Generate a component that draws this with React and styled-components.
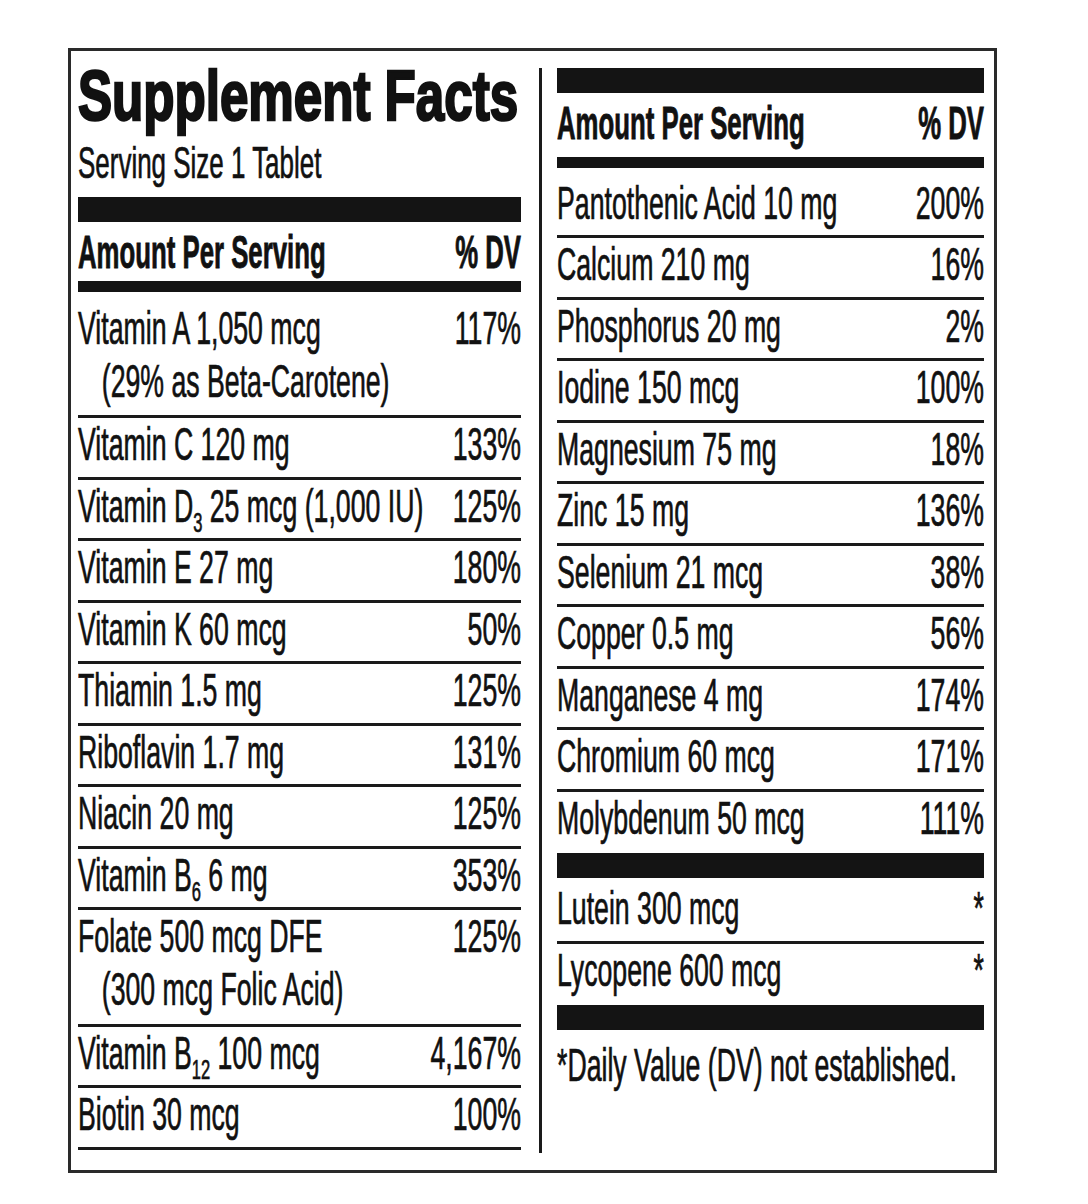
import React from "react";
import styled, { createGlobalStyle } from "styled-components";

const GlobalStyle = createGlobalStyle`
  body {
    margin: 0;
    background: #fff;
    color: #111;
    font-family: "Liberation Sans", Arial, sans-serif;
  }
`;

const Wrapper = styled.div`
  padding: 48px 0 0 68px;
`;

const Panel = styled.div`
  box-sizing: border-box;
  width: 929px;
  height: 1125px;
  border: 3px solid #2a2a2a;
  padding: 17px 10px 17px 7px;
  display: flex;
`;

const Column = styled.div`
  width: ${p => p.$w}px;
  flex-shrink: 0;
  display: flex;
  flex-direction: column;
`;

const Divider = styled.div`
  width: 3px;
  background: #1a1a1a;
  margin: 0 15px 0 18px;
`;

const Title = styled.h1`
  margin: 0;
  font-size: 70px;
  line-height: 56px;
  font-weight: 700;
  white-space: nowrap;
  transform: scaleX(0.73);
  transform-origin: left top;
  -webkit-text-stroke: 2.5px #111;
`;

const Serving = styled.div`
  margin-top: 14px;
  font-size: 44px;
  line-height: 50px;
  white-space: nowrap;
  transform: scaleX(0.59);
  transform-origin: left top;
  -webkit-text-stroke: 0.7px #111;
`;

const Bar = styled.div`
  flex-shrink: 0;
  height: ${p => p.$h}px;
  margin-top: ${p => p.$mt || 0}px;
  background: #141414;
`;

const Header = styled.div`
  padding: 4px 0 ${p => p.$pb}px;
`;

const Scaled = styled.div`
  width: ${p => 100 / p.$sx}%;
  transform: scaleX(${p => p.$sx});
  transform-origin: left top;
  display: flex;
  justify-content: space-between;
  align-items: flex-start;
  white-space: nowrap;
  font-size: 46px;
  line-height: 52px;
  font-weight: ${p => (p.$bold ? 700 : 400)};
  -webkit-text-stroke: ${p => (p.$bold ? "0.9px" : "0.7px")} #111;
`;

const Row = styled.div`
  padding: ${p => p.$top || 0}px 0 6.5px;
  border-bottom: 3px solid ${p => (p.$noRule ? "transparent" : "#1a1a1a")};
`;

const SubLine = styled.div`
  line-height: 55px;
  padding-left: 41px;
`;

const Sub = styled.span`
  font-size: 0.62em;
  line-height: 0;
  vertical-align: -10px;
`;

const Footnote = styled.div`
  padding-top: 9px;
`;

const leftRows = [
  { name: "Vitamin A 1,050 mcg", more: "(29% as Beta-Carotene)", dv: "117%", top: 9.5 },
  { name: "Vitamin C 120 mg", dv: "133%" },
  { name: <>Vitamin D<Sub>3</Sub> 25 mcg (1,000 IU)</>, dv: "125%" },
  { name: "Vitamin E 27 mg", dv: "180%" },
  { name: "Vitamin K 60 mcg", dv: "50%" },
  { name: "Thiamin 1.5 mg", dv: "125%" },
  { name: "Riboflavin 1.7 mg", dv: "131%" },
  { name: "Niacin 20 mg", dv: "125%" },
  { name: <>Vitamin B<Sub>6</Sub> 6 mg</>, dv: "353%" },
  { name: "Folate 500 mcg DFE", more: "(300 mcg Folic Acid)", dv: "125%" },
  { name: <>Vitamin B<Sub>12</Sub> 100 mcg</>, dv: "4,167%" },
  { name: "Biotin 30 mcg", dv: "100%" },
];

const minerals = [
  { name: "Pantothenic Acid 10 mg", dv: "200%", top: 8.5 },
  { name: "Calcium 210 mg", dv: "16%" },
  { name: "Phosphorus 20 mg", dv: "2%" },
  { name: "Iodine 150 mcg", dv: "100%" },
  { name: "Magnesium 75 mg", dv: "18%" },
  { name: "Zinc 15 mg", dv: "136%" },
  { name: "Selenium 21 mcg", dv: "38%" },
  { name: "Copper 0.5 mg", dv: "56%" },
  { name: "Manganese 4 mg", dv: "174%" },
  { name: "Chromium 60 mcg", dv: "171%" },
  { name: "Molybdenum 50 mcg", dv: "111%", noRule: true },
];

const others = [
  { name: "Lutein 300 mcg", dv: "*", top: 4 },
  { name: "Lycopene 600 mcg", dv: "*", noRule: true },
];

function FactRow({ item }) {
  return (
    <Row $top={item.top} $noRule={item.noRule}>
      <Scaled $sx={0.58}>
        <div>
          <div>{item.name}</div>
          {item.more && <SubLine>{item.more}</SubLine>}
        </div>
        <div>{item.dv}</div>
      </Scaled>
    </Row>
  );
}

function HeaderRow({ pb }) {
  return (
    <Header $pb={pb}>
      <Scaled $sx={0.56} $bold>
        <span>Amount Per Serving</span>
        <span>% DV</span>
      </Scaled>
    </Header>
  );
}

export default function App() {
  return (
    <>
      <GlobalStyle />
      <Wrapper>
        <Panel>
          <Column $w={443}>
            <Title>Supplement Facts</Title>
            <Serving>Serving Size 1 Tablet</Serving>
            <Bar $h={25} $mt={9} />
            <HeaderRow pb={3} />
            <Bar $h={11} />
            {leftRows.map((r, i) => (
              <FactRow key={i} item={r} />
            ))}
          </Column>
          <Divider />
          <Column $w={427}>
            <Bar $h={25} />
            <HeaderRow pb={8} />
            <Bar $h={11} />
            {minerals.map((r, i) => (
              <FactRow key={i} item={r} />
            ))}
            <Bar $h={25} />
            {others.map((r, i) => (
              <FactRow key={i} item={r} />
            ))}
            <Bar $h={25} />
            <Footnote>
              <Scaled $sx={0.58}>
                <span>*Daily Value (DV) not established.</span>
              </Scaled>
            </Footnote>
          </Column>
        </Panel>
      </Wrapper>
    </>
  );
}
